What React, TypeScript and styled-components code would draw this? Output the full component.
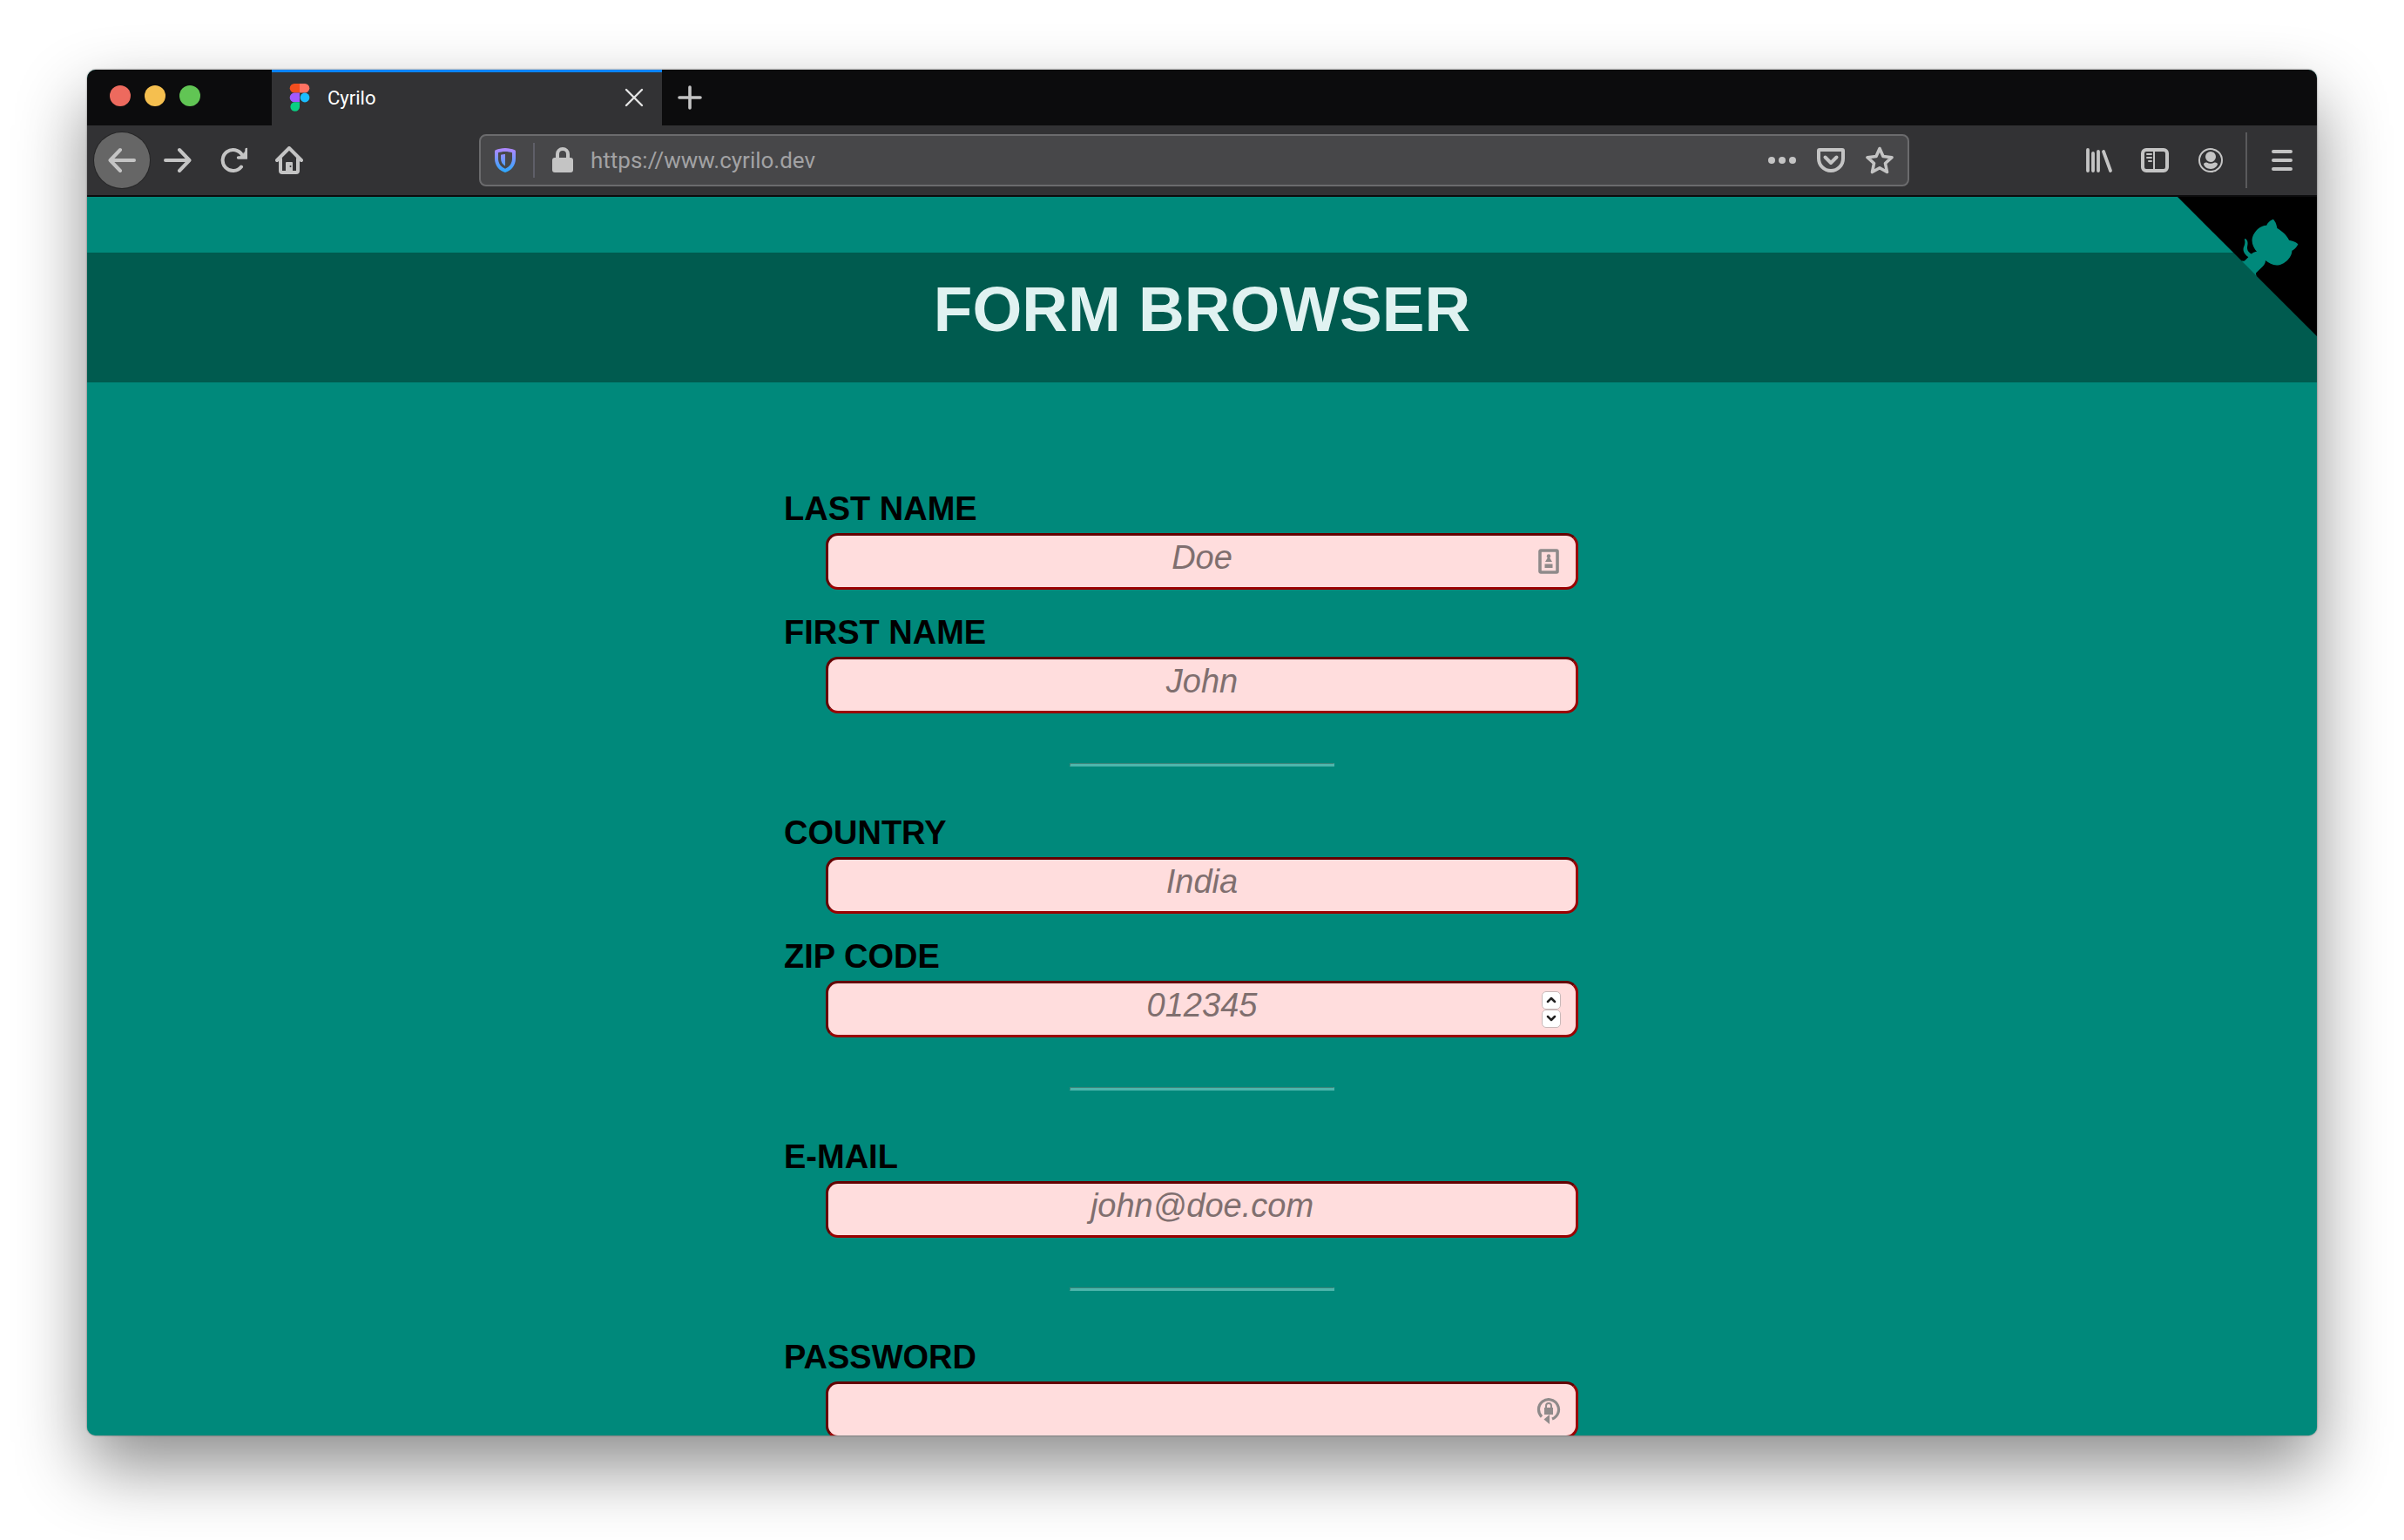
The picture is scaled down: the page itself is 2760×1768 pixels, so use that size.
import React from 'react';
import styled, { createGlobalStyle, css } from 'styled-components';

const Global = createGlobalStyle`
  * { box-sizing: border-box; }
  html, body { margin: 0; height: 100%; background: #fff; }
  body { overflow: hidden; }
  #root { height: 100%; }
  button { margin: 0; padding: 0; border: 0; background: none; color: inherit; font: inherit; }
  svg { display: block; }
`;

const Desktop = styled.div`
  height: 100vh;
  padding: 80px 100px 120px;
  font-family: Roboto, 'Liberation Sans', sans-serif;
`;

const Frame = styled.div`
  display: flex;
  flex-direction: column;
  height: 100%;
  border-radius: 10px;
  box-shadow: 0 0 2px rgba(0, 0, 0, 0.6), 0 36px 80px rgba(0, 0, 0, 0.45);
`;

const Clip = styled.div`
  display: flex;
  flex-direction: column;
  flex: 1;
  min-height: 0;
  overflow: hidden;
  border-radius: 10px;
  background: #00897b;
`;

const TabStrip = styled.div`
  display: flex;
  flex: none;
  height: 64px;
  background: #0c0c0d;
  color: #c4c4c4;
`;

const Lights = styled.div`
  display: flex;
  gap: 16px;
  width: 212px;
  padding: 18px 26px;
`;

const Light = styled.button<{ $color: string }>`
  width: 24px;
  height: 24px;
  border-radius: 50%;
  background: ${(p) => p.$color};
`;

const Tab = styled.div`
  display: flex;
  align-items: center;
  width: 448px;
  padding: 0 20px;
  gap: 20px;
  background: #323234;
  box-shadow: inset 0 3px 0 #0a84ff;
  color: #fff;
  font-size: 22px;
`;

const TabTitle = styled.span`
  flex: 1;
`;

const IconButton = styled.button<{ $round?: boolean }>`
  display: flex;
  align-items: center;
  justify-content: center;
  flex: none;
  width: 64px;
  height: 64px;
  color: #c4c4c4;
  ${(p) =>
    p.$round &&
    css`
      border-radius: 50%;
      background: #666;
      box-shadow: 0 0 0 1px #262627;
    `}
`;

const SmallButton = styled(IconButton)`
  width: 24px;
  height: 24px;
`;

const Toolbar = styled.div`
  display: flex;
  align-items: center;
  flex: none;
  height: 82px;
  padding: 0 8px;
  border-bottom: 2px solid #0c0c0d;
  background: #323234;
`;

const Group = styled.div`
  display: flex;
  align-items: center;
`;

const AddressBar = styled.div`
  display: flex;
  align-items: center;
  flex: 1;
  height: 60px;
  margin: 0 186px;
  padding: 0 16px 0 12px;
  border: 2px solid #6b6b6d;
  border-radius: 8px;
  background: #474749;
  color: #c4c4c4;
`;

const Divider = styled.span`
  width: 2px;
  height: 40px;
  background: #5f5f68;
`;

const TallDivider = styled(Divider)`
  height: 64px;
  margin: 0 8px;
  background: #5a5a5c;
`;

const BarButton = styled(IconButton)`
  width: 32px;
  height: 40px;
`;

const Address = styled.input`
  flex: 1;
  min-width: 0;
  padding: 0;
  border: 0;
  outline: 0;
  background: transparent;
  color: #a2a2a4;
  font: 26px Roboto, 'Liberation Sans', sans-serif;
`;

const AddressIcons = styled.div`
  display: flex;
  gap: 24px;
`;

const ShieldSlot = styled.div`
  display: flex;
  gap: 16px;
  align-items: center;
  margin-right: 16px;
`;

const LockSlot = styled.div`
  margin-right: 16px;
`;

const Page = styled.main`
  position: relative;
  flex: 1;
  min-height: 0;
  overflow: hidden;
  padding-top: 64px;
  background: #00897b;
  font-family: 'Liberation Sans', Arial, sans-serif;
`;

const Corner = styled.a`
  position: absolute;
  top: 0;
  right: 0;
`;

const Title = styled.h1`
  margin: 0 0 120px;
  padding: 21px 0 40px;
  background: #005b4f;
  color: #e0f2f1;
  font-size: 73px;
  line-height: 88px;
  text-align: center;
`;

const Form = styled.form`
  width: 960px;
  margin: 0 auto;
`;

const Field = styled.div`
  padding-bottom: 24px;
`;

const Label = styled.label`
  display: block;
  padding-bottom: 3px;
  font-size: 38px;
  font-weight: bold;
  line-height: 50px;
`;

const Box = styled.div`
  position: relative;
  margin: 0 48px;
`;

const Input = styled.input`
  display: block;
  width: 100%;
  height: 65px;
  padding: 0 0 8px;
  border: 3px solid;
  border-color: #640000 #9a0000 #9a0000 #640000;
  border-radius: 14px;
  outline: 0;
  background: #ffdddd;
  font: italic 38px 'Liberation Sans', Arial, sans-serif;
  text-align: center;
  &::placeholder { color: #806f6f; opacity: 1; }
`;

const Badge = styled.div`
  position: absolute;
  top: 0;
  right: 20px;
  display: flex;
  align-items: center;
  height: 100%;
  color: #8f8a8a;
`;

const Spinner = styled(Badge)`
  flex-direction: column;
  justify-content: center;
`;

const Step = styled.button`
  display: flex;
  align-items: center;
  justify-content: center;
  width: 22px;
  height: 21px;
  border: 1px solid #c9b9b9;
  border-radius: 5px;
  background: #fff;
  color: #222;
`;

const Rule = styled.hr`
  width: 304px;
  height: 4px;
  margin: 33px auto 51px;
  border: 1px solid;
  border-color: #3c8479 #4db6ac #4db6ac #3c8479;
  background: #4db6ac;
`;

const stroke = { fill: 'none', stroke: 'currentColor', strokeLinecap: 'round' as const, strokeLinejoin: 'round' as const };

const Figma = () => (
  <svg width="24" height="32" viewBox="0 0 24 32">
    <path fill="#f24e1e" d="M12 0H6a5.3 5.3 0 0 0 0 10.6h6z" />
    <path fill="#ff7262" d="M12 0h6a5.3 5.3 0 0 1 0 10.6h-6z" />
    <path fill="#a259ff" d="M12 10.6H6a5.3 5.3 0 0 0 0 10.7h6z" />
    <circle fill="#1abcfe" cx="18" cy="16" r="5.4" />
    <path fill="#0acf83" d="M12 21.3H6A5.3 5.3 0 1 0 12 26.7z" />
  </svg>
);

const Octocat = () => (
  <svg width="160" height="160" viewBox="0 0 250 250" aria-hidden="true">
    <path d="M0,0 L115,115 L130,115 L142,142 L250,250 L250,0 Z" fill="#000" />
    <path fill="#00897b" d="M128.3,109.0 C113.8,99.7 119.0,89.6 119.0,89.6 C122.0,82.7 120.5,78.6 120.5,78.6 C119.2,72.0 123.4,76.3 123.4,76.3 C127.3,80.9 125.5,87.3 125.5,87.3 C122.9,97.6 130.6,101.9 134.4,103.2" />
    <path fill="#00897b" d="M115.0,115.0 C114.9,115.1 118.7,116.5 119.8,115.4 L133.7,101.6 C136.9,99.2 139.9,98.4 142.2,98.6 C133.8,88.0 127.5,74.4 143.8,58.0 C148.5,53.4 154.0,51.2 159.7,51.0 C160.3,49.4 163.2,43.6 171.4,40.1 C171.4,40.1 176.1,42.5 178.8,56.2 C183.1,58.6 187.2,61.8 190.9,65.4 C194.5,69.0 197.7,73.2 200.1,77.6 C213.8,80.2 216.3,84.9 216.3,84.9 C212.7,93.1 206.9,96.0 205.4,96.6 C205.1,102.4 203.0,107.8 198.3,112.5 C181.9,128.9 168.3,122.5 157.7,114.1 C157.9,116.9 156.7,120.9 152.7,124.9 L141.0,136.5 C139.8,137.7 141.6,141.9 141.8,141.8 Z" />
  </svg>
);

const TextField = ({ id, label, hint, type = 'text', children }: { id: string; label: string; hint?: string; type?: string; children?: React.ReactNode }) => (
  <Field>
    <Label htmlFor={id}>{label}</Label>
    <Box>
      <Input id={id} type={type} placeholder={hint} />
      {children}
    </Box>
  </Field>
);

export default function App() {
  return (
    <>
      <Global />
      <Desktop>
        <Frame>
          <Clip>
            <TabStrip>
              <Lights>
                <Light $color="#ed6a5e" aria-label="Close window" />
                <Light $color="#f5bf4f" aria-label="Minimise window" />
                <Light $color="#61c554" aria-label="Zoom window" />
              </Lights>
              <Tab>
                <Figma />
                <TabTitle>Cyrilo</TabTitle>
                <SmallButton aria-label="Close tab">
                  <svg width="24" height="24" viewBox="0 0 24 24" {...stroke} stroke="#e4e4e4" strokeWidth="2.4"><path d="M3 3l18 18M21 3L3 21" /></svg>
                </SmallButton>
              </Tab>
              <IconButton aria-label="New tab">
                <svg width="32" height="32" viewBox="0 0 32 32" {...stroke} strokeWidth="3.6"><path d="M16 4v24M4 16h24" /></svg>
              </IconButton>
            </TabStrip>
            <Toolbar>
              <Group>
                <IconButton $round aria-label="Back">
                  <svg width="32" height="32" viewBox="0 0 32 32" {...stroke} strokeWidth="4"><path d="M30 16H3M14 4L2.500 16 14 28" /></svg>
                </IconButton>
                <IconButton aria-label="Forward">
                  <svg width="32" height="32" viewBox="0 0 32 32" {...stroke} strokeWidth="4"><path d="M2 16h27M18 4l11.500 12L18 28" /></svg>
                </IconButton>
                <IconButton aria-label="Reload">
                  <svg width="32" height="32" viewBox="0 0 32 32" {...stroke} strokeWidth="4"><path d="M25 23.500A12 12 0 1 1 26 10" /><path d="M31 3.500V13H21.500" strokeWidth="3.400" /><path d="M31 5v8h-8z" fill="currentColor" strokeWidth="1" /></svg>
                </IconButton>
                <IconButton aria-label="Home">
                  <svg width="32" height="32" viewBox="0 0 32 32" {...stroke} strokeWidth="4"><path d="M2 16L16 2l14 14M6 14v14q0 2 2 2h16q2 0 2-2V14" /><path d="M12 29V19q0-1 1-1h6q1 0 1 1v10z" fill="currentColor" stroke="none" /><circle cx="17.500" cy="23" r="1" fill="#323234" stroke="none" /></svg>
                </IconButton>
              </Group>
              <AddressBar>
                <ShieldSlot>
                  <BarButton aria-label="Tracking protection">
                    <svg width="24" height="28" viewBox="0 0 24 28">
                      <defs><linearGradient id="shield" x1="0" y1="0" x2="0" y2="1"><stop offset="0" stopColor="#b386ff" /><stop offset="1" stopColor="#2aa9ff" /></linearGradient></defs>
                      <path fill="url(#shield)" fillRule="evenodd" d="M12 0C8 0 4 1 1.500 2 .5 2.400 0 3 0 4v8c0 8 5 14 12 16 7-2 12-8 12-16V4c0-1-.5-1.600-1.500-2C20 1 16 0 12 0zm0 4c3 0 6 .6 8 1.300V12c0 5.500-3 9.700-8 11.700C7 21.700 4 17.500 4 12V5.300C6 4.600 9 4 12 4zM12 7c-1.700 0-3.500.3-5 .7V12c0 4 2 7 5 8.500z" />
                    </svg>
                  </BarButton>
                  <Divider />
                </ShieldSlot>
                <LockSlot>
                  <BarButton aria-label="Site information">
                    <svg width="24" height="30" viewBox="0 0 24 30" fill="currentColor"><rect y="12" width="24" height="17" rx="3" /><path d="M6 14V8a6 6 0 0 1 12 0v6" fill="none" stroke="currentColor" strokeWidth="4" /></svg>
                  </BarButton>
                </LockSlot>
                <Address aria-label="Address" defaultValue="https://www.cyrilo.dev" />
                <AddressIcons>
                  <BarButton aria-label="Page actions">
                    <svg width="32" height="32" viewBox="0 0 32 32" fill="currentColor"><circle cx="4" cy="16" r="4" /><circle cx="16" cy="16" r="4" /><circle cx="28" cy="16" r="4" /></svg>
                  </BarButton>
                  <BarButton aria-label="Save to Pocket">
                    <svg width="32" height="32" viewBox="0 0 32 32" {...stroke} strokeWidth="4"><path d="M3 4h26q1 0 1 1v9a14 14 0 0 1-28 0V5q0-1 1-1z" /><path d="M9.500 12.500L16 19l6.500-6.500" /></svg>
                  </BarButton>
                  <BarButton aria-label="Bookmark">
                    <svg width="32" height="32" viewBox="0 0 32 32" {...stroke} strokeWidth="3.6"><path d="M16 2.500l4 9 10 1.200-7.500 6.800 2 10L16 24.700 7.500 29.500l2-10L2 12.700l10-1.200z" /></svg>
                  </BarButton>
                </AddressIcons>
              </AddressBar>
              <Group>
                <IconButton aria-label="Library">
                  <svg width="32" height="32" viewBox="0 0 32 32" {...stroke} strokeWidth="3.800"><path d="M3 4v24M9 8v20M15 6v22M21 6l8 22" /></svg>
                </IconButton>
                <IconButton aria-label="Sidebars">
                  <svg width="32" height="32" viewBox="0 0 32 32" {...stroke} strokeWidth="4"><rect x="2" y="4" width="28" height="24" rx="4" /><path d="M15 4v24" strokeWidth="2" /><path d="M7 9h5M7 13h5M9 17h3" strokeWidth="2" /></svg>
                </IconButton>
                <IconButton aria-label="Account">
                  <svg width="32" height="32" viewBox="0 0 32 32" fill="currentColor"><circle cx="16" cy="16" r="13" fill="none" stroke="currentColor" strokeWidth="2" /><circle cx="16" cy="12" r="6" /><path d="M8 20q1-2 3.500-1.500 4.500 2.500 9 0Q23 18 24 20c0 3-4 6-8 6s-8-3-8-6z" /></svg>
                </IconButton>
                <TallDivider />
                <IconButton aria-label="Menu">
                  <svg width="32" height="32" viewBox="0 0 32 32" {...stroke} strokeWidth="4"><path d="M6 6h20M6 16h20M6 26h20" /></svg>
                </IconButton>
              </Group>
            </Toolbar>
            <Page>
              <Title>FORM BROWSER</Title>
              <Corner href="#" aria-label="View source on GitHub"><Octocat /></Corner>
              <Form>
                <TextField id="last" label="LAST NAME" hint="Doe">
                  <Badge>
                    <svg width="28" height="32" viewBox="0 0 28 32" fill="currentColor"><rect x="4" y="3" width="20" height="25" rx="1" fill="none" stroke="currentColor" strokeWidth="3.600" /><circle cx="14" cy="9.500" r="2.200" /><path d="M10 16l3-5h2l3 5zM9.500 18.500h9v4.500h-9z" /></svg>
                  </Badge>
                </TextField>
                <TextField id="first" label="FIRST NAME" hint="John" />
                <Rule />
                <TextField id="country" label="COUNTRY" hint="India" />
                <TextField id="zip" label="ZIP CODE" hint="012345">
                  <Spinner>
                    <Step type="button" aria-label="Increase"><svg width="12" height="8" viewBox="0 0 12 8" {...stroke} strokeWidth="2.500"><path d="M2 6l4-4 4 4" /></svg></Step>
                    <Step type="button" aria-label="Decrease"><svg width="12" height="8" viewBox="0 0 12 8" {...stroke} strokeWidth="2.500"><path d="M2 2l4 4 4-4" /></svg></Step>
                  </Spinner>
                </TextField>
                <Rule />
                <TextField id="mail" label="E-MAIL" hint="john@doe.com" type="email" />
                <Rule />
                <TextField id="password" label="PASSWORD" type="password">
                  <Badge>
                    <svg width="28" height="32" viewBox="0 0 28 32" fill="currentColor"><path d="M6 23.500A11.500 11.500 0 1 1 18 26" fill="none" stroke="currentColor" strokeWidth="3.200" /><path d="M15 21v11l-6.500-5.500zM9 13h10v8H9z" /><path d="M11 13v-2a3 3 0 0 1 6 0v2" fill="none" stroke="currentColor" strokeWidth="2" /></svg>
                  </Badge>
                </TextField>
              </Form>
            </Page>
          </Clip>
        </Frame>
      </Desktop>
    </>
  );
}
